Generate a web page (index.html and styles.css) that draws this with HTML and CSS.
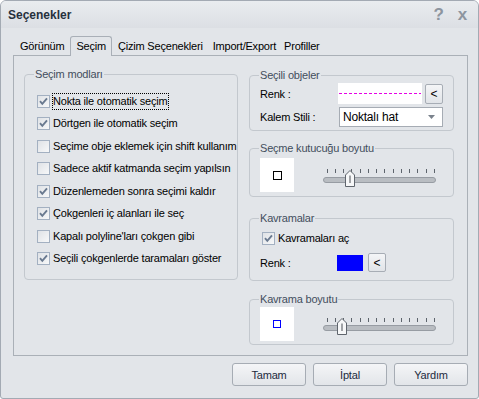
FILE: index.html
```html
<!DOCTYPE html>
<html lang="tr">
<head>
    <meta charset="UTF-8" />
    <meta name="viewport" content="width=device-width, initial-scale=1.0" />
    <title>Seçenekler</title>
    <link rel="stylesheet" href="styles.css">
</head>
<body>
    <div class="window">
        <div class="titlebar">
            <span class="title">Seçenekler</span>
            <div class="title-buttons">
                <span>?</span>
                <span>x</span>
            </div>
        </div>

        <div class="tabs">
            <span class="tab">Görünüm</span>
            <span class="tab active">Seçim</span>
            <span class="tab">Çizim Seçenekleri</span>
            <span class="tab tight">Import/Export</span>
            <span class="tab tight">Profiller</span>
        </div>

        <div class="panel">
            <div class="group modes">
                <div class="group-title">Seçim modları</div>
                <div class="check-list">
                    <div class="check-row">
                        <span class="cb"><svg width="11" height="11" viewBox="0 0 11 11"><path d="M2 5.2 L4.3 7.8 L9 2.3" fill="none" stroke="#6a7a90" stroke-width="1.9"/></svg></span>
                        <span class="cb-label focus">Nokta ile otomatik seçim</span>
                    </div>
                    <div class="check-row">
                        <span class="cb"><svg width="11" height="11" viewBox="0 0 11 11"><path d="M2 5.2 L4.3 7.8 L9 2.3" fill="none" stroke="#6a7a90" stroke-width="1.9"/></svg></span>
                        <span class="cb-label">Dörtgen ile otomatik seçim</span>
                    </div>
                    <div class="check-row">
                        <span class="cb"></span>
                        <span class="cb-label">Seçime obje eklemek için shift kullanım</span>
                    </div>
                    <div class="check-row">
                        <span class="cb"></span>
                        <span class="cb-label">Sadece aktif katmanda seçim yapılsın</span>
                    </div>
                    <div class="check-row">
                        <span class="cb"><svg width="11" height="11" viewBox="0 0 11 11"><path d="M2 5.2 L4.3 7.8 L9 2.3" fill="none" stroke="#6a7a90" stroke-width="1.9"/></svg></span>
                        <span class="cb-label">Düzenlemeden sonra seçimi kaldır</span>
                    </div>
                    <div class="check-row">
                        <span class="cb"><svg width="11" height="11" viewBox="0 0 11 11"><path d="M2 5.2 L4.3 7.8 L9 2.3" fill="none" stroke="#6a7a90" stroke-width="1.9"/></svg></span>
                        <span class="cb-label">Çokgenleri iç alanları ile seç</span>
                    </div>
                    <div class="check-row">
                        <span class="cb"></span>
                        <span class="cb-label">Kapalı polyline'ları çokgen gibi</span>
                    </div>
                    <div class="check-row">
                        <span class="cb"><svg width="11" height="11" viewBox="0 0 11 11"><path d="M2 5.2 L4.3 7.8 L9 2.3" fill="none" stroke="#6a7a90" stroke-width="1.9"/></svg></span>
                        <span class="cb-label">Seçili çokgenlerde taramaları göster</span>
                    </div>
                </div>
            </div>

            <div class="right-col">
                <div class="group selected">
                    <div class="group-title">Seçili objeler</div>
                    <div class="field-row first">
                        <span class="field-label">Renk :</span>
                        <span class="dash-preview"><span class="dash-line"></span></span>
                        <span class="pick-btn">&lt;</span>
                    </div>
                    <div class="field-row second">
                        <span class="field-label wide">Kalem Stili :</span>
                        <span class="select">
                            <span>Noktalı hat</span>
                            <svg width="7" height="4" viewBox="0 0 7 4"><path d="M0 0 H7 L3.5 4 Z" fill="#7a828c"/></svg>
                        </span>
                    </div>
                </div>

                <div class="group box-size">
                    <div class="group-title">Seçme kutucuğu boyutu</div>
                    <div class="size-row">
                        <span class="preview"><span class="mark"></span></span>
                        <svg class="slider" width="116" height="34" viewBox="0 0 116 34">
                            <path d="M6.5 11v4M14.5 11v4M22.5 11v4M30.5 11v4M39.5 11v4M47.5 11v4M55.5 11v4M63.5 11v4M72.5 11v4M80.5 11v4M88.5 11v4M96.5 11v4M105.5 11v4M113.5 11v4" stroke="#5d646c" stroke-width="1"/>
                            <rect x="2.5" y="19.5" width="112" height="5" rx="2.5" fill="#b9bdc2" stroke="#979ca3"/>
                            <path d="M24.5 28.5 V17 L29 12.5 L33.5 17 V28.5 Z" fill="#f6f7f8" stroke="#5f656d"/>
                            <path d="M29 17.5 V25" stroke="#4a4f55"/>
                        </svg>
                    </div>
                </div>

                <div class="group grips">
                    <div class="group-title">Kavramalar</div>
                    <div class="check-row grip-check">
                        <span class="cb"><svg width="11" height="11" viewBox="0 0 11 11"><path d="M2 5.2 L4.3 7.8 L9 2.3" fill="none" stroke="#6a7a90" stroke-width="1.9"/></svg></span>
                        <span class="cb-label">Kavramaları aç</span>
                    </div>
                    <div class="field-row grip-color">
                        <span class="field-label narrow">Renk :</span>
                        <span class="color-swatch"></span>
                        <span class="pick-btn">&lt;</span>
                    </div>
                </div>

                <div class="group grip-size">
                    <div class="group-title">Kavrama boyutu</div>
                    <div class="size-row">
                        <span class="preview"><span class="mark blue"></span></span>
                        <svg class="slider" width="116" height="34" viewBox="0 0 116 34">
                            <path d="M6.5 11v4M14.5 11v4M22.5 11v4M30.5 11v4M39.5 11v4M47.5 11v4M55.5 11v4M63.5 11v4M72.5 11v4M80.5 11v4M88.5 11v4M96.5 11v4M105.5 11v4M113.5 11v4" stroke="#5d646c" stroke-width="1"/>
                            <rect x="2.5" y="18.5" width="112" height="5" rx="2.5" fill="#b9bdc2" stroke="#979ca3"/>
                            <path d="M16.5 27.5 V16 L21 11.5 L25.5 16 V27.5 Z" fill="#f6f7f8" stroke="#5f656d"/>
                            <path d="M21 16.5 V24" stroke="#4a4f55"/>
                        </svg>
                    </div>
                </div>
            </div>
        </div>

        <div class="actions">
            <button class="btn">Tamam</button>
            <button class="btn">İptal</button>
            <button class="btn">Yardım</button>
        </div>
    </div>
</body>
</html>
```

FILE: styles.css
```css
body {
    margin: 0;
    font-family: "Liberation Sans", Arial, sans-serif;
    font-size: 11px;
    letter-spacing: -0.2px;
    color: #000;
    background-color: #ffffff;
}

.window {
    width: 479px;
    height: 399px;
    box-sizing: border-box;
    border: 1px solid #a3aab3;
    border-radius: 6px 6px 3px 3px;
    background-color: #e2e5e9;
    display: flex;
    flex-direction: column;
    overflow: hidden;
}

.titlebar {
    height: 27px;
    flex: none;
    display: flex;
    align-items: center;
    justify-content: space-between;
    padding: 0 11px 0 7px;
    background: linear-gradient(#e9ecef, #dcdfe4);
}

.title {
    font-weight: bold;
    font-size: 12px;
    letter-spacing: 0;
    color: #26303d;
}

.title-buttons {
    display: flex;
    gap: 14px;
    color: #8d959f;
    font-weight: bold;
    font-size: 17px;
}

/* tabs */
.tabs {
    flex: none;
    display: flex;
    align-items: flex-start;
    height: 19px;
    padding: 8px 0 0 13px;
}

.tab {
    height: 20px;
    box-sizing: border-box;
    padding: 2px 5px 0;
    line-height: 15px;
    border: 1px solid transparent;
    border-bottom: none;
    white-space: nowrap;
}

.tab.tight {
    padding: 2px 3px 0;
}

.tab.active {
    border-color: #a9afb7;
    border-radius: 3px 3px 0 0;
    background-color: #e2e5e9;
    position: relative;
    z-index: 1;
}

.panel {
    flex: none;
    height: 301px;
    box-sizing: border-box;
    margin: 0 10px 0 12px;
    border: 1px solid #aab0b7;
    padding: 18px 13px 0 10px;
    display: flex;
    align-items: flex-start;
    gap: 11px;
}

/* group boxes */
.group {
    border: 1px solid #c3c8ce;
    border-radius: 4px;
    display: flex;
    flex-direction: column;
    box-sizing: border-box;
}

.group-title {
    align-self: flex-start;
    margin: -7px 0 0 9px;
    padding: 0 1px;
    line-height: 13px;
    color: #434e5d;
    background-color: #e2e5e9;
}

.modes {
    width: 214px;
    height: 206px;
}

.check-list {
    padding: 9px 0 0 12px;
    overflow: hidden;
}

.check-row {
    height: 22.5px;
    display: flex;
    align-items: center;
    white-space: nowrap;
}

.cb {
    width: 13px;
    height: 13px;
    flex: none;
    box-sizing: border-box;
    border: 1px solid #a3b0c1;
    background: linear-gradient(135deg, #dfe2e6, #f7f8f9);
    display: flex;
    align-items: center;
    justify-content: center;
}

.cb-label {
    margin-left: 2px;
    padding: 1px 1px 1px 0;
    line-height: 13px;
    border: 1px dotted transparent;
}

.cb-label.focus {
    border-color: #000;
}

.right-col {
    width: 205px;
    display: flex;
    flex-direction: column;
}

.selected {
    height: 56px;
    margin-top: 1px;
}

.field-row {
    display: flex;
    align-items: center;
    padding-left: 10px;
}

.field-row.first {
    margin-top: 1px;
    height: 21px;
}

.field-row.second {
    margin-top: 3px;
    height: 20px;
}

.field-label {
    width: 78px;
    flex: none;
}

.field-label.wide {
    width: 79px;
}

.field-label.narrow {
    width: 77px;
}

.dash-preview {
    width: 84px;
    height: 21px;
    background-color: #fff;
    display: flex;
    align-items: center;
    justify-content: center;
    margin-right: 3px;
}

.dash-line {
    width: 82px;
    height: 1px;
    background: repeating-linear-gradient(to right, #e600e6 0 3px, transparent 3px 5px);
}

.pick-btn {
    width: 18px;
    height: 20px;
    box-sizing: border-box;
    border: 1px solid #a7adb5;
    border-radius: 2px;
    background: linear-gradient(#f4f5f7, #e1e4e8);
    display: flex;
    align-items: center;
    justify-content: center;
    font-size: 12px;
}

.select {
    width: 104px;
    height: 20px;
    box-sizing: border-box;
    border: 1px solid #a6acb4;
    background-color: #fff;
    display: flex;
    align-items: center;
    justify-content: space-between;
    padding: 0 7px 0 3px;
    font-size: 12px;
}

.box-size {
    height: 49px;
    margin-top: 17px;
}

.size-row {
    display: flex;
    align-items: flex-start;
    padding-left: 10px;
    margin-top: 3px;
}

.grip-size .size-row {
    margin-top: 1px;
}

.preview {
    width: 34px;
    height: 34px;
    flex: none;
    background-color: #fff;
    display: flex;
    align-items: center;
    justify-content: center;
}

.mark {
    width: 9px;
    height: 9px;
    box-sizing: border-box;
    border: 1.5px solid #000;
}

.mark.blue {
    width: 8px;
    height: 8px;
    border-color: #0000ff;
}

.slider {
    margin-left: 27px;
}

.grips {
    height: 63px;
    margin-top: 21px;
}

.grip-check {
    height: 16px;
    margin-top: 5px;
    padding-left: 12px;
}

.grip-color {
    height: 19px;
    margin-top: 7px;
}

.color-swatch {
    width: 26px;
    height: 16px;
    background-color: #0000ff;
    margin-right: 5px;
}

.grip-color .pick-btn {
    height: 19px;
}

.grip-size {
    height: 46px;
    margin-top: 18px;
}

/* bottom buttons */
.actions {
    display: flex;
    justify-content: flex-end;
    gap: 7px;
    margin: 7px 10px 0 0;
}

.btn {
    width: 74px;
    height: 23px;
    border: 1px solid #a6acb4;
    border-radius: 3px;
    background: linear-gradient(#f4f5f7, #e2e5e9);
    font-family: "Liberation Sans", Arial, sans-serif;
    font-size: 11px;
    letter-spacing: -0.2px;
    color: #1c2a3d;
    padding: 0;
}
```
